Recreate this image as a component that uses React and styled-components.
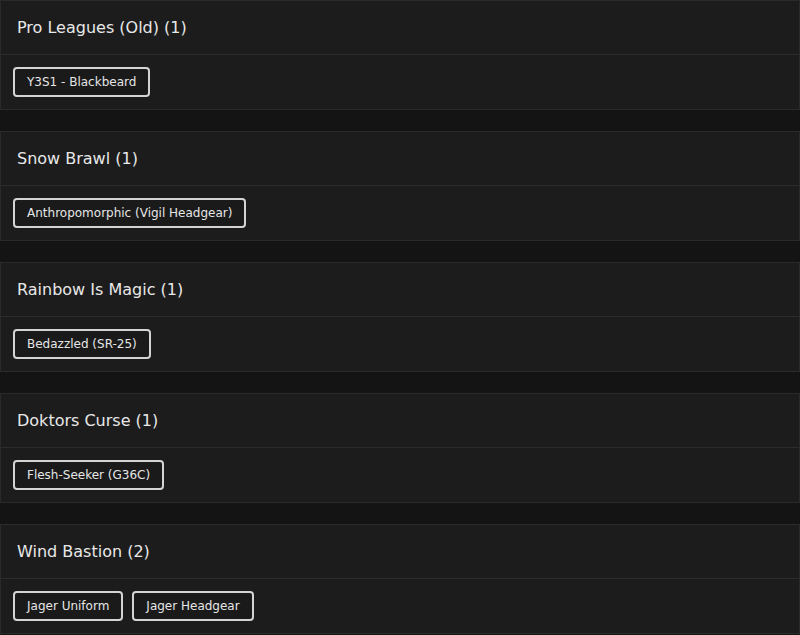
import styled, { createGlobalStyle } from "styled-components";

const GlobalStyle = createGlobalStyle`
  body {
    margin: 0;
    background-color: #141414;
    font-family: "DejaVu Sans", "Noto Sans", sans-serif;
  }
`;

const List = styled.div`
  display: flex;
  flex-direction: column;
  gap: 21px;
`;

const Card = styled.section`
  background-color: #1c1c1c;
  border: 1px solid #2a2a2a;
`;

const Header = styled.div`
  height: 53px;
  display: flex;
  align-items: center;
  padding: 0 16px;
  border-bottom: 1px solid #2c2c2c;
`;

const Title = styled.h2`
  margin: 0;
  font-size: 16px;
  font-weight: 500;
  color: #e8e8e8;
`;

const Body = styled.div`
  display: flex;
  flex-wrap: wrap;
  gap: 9px;
  padding: 12px;
`;

const Tag = styled.button`
  height: 30px;
  padding: 0 12px;
  background-color: #1a1a1a;
  border: 2px solid #d4d4d4;
  border-radius: 4px;
  color: #e6e6e6;
  font-family: inherit;
  font-size: 12px;
  cursor: pointer;
`;

const groups = [
  { name: "Pro Leagues (Old)", items: ["Y3S1 - Blackbeard"] },
  { name: "Snow Brawl", items: ["Anthropomorphic (Vigil Headgear)"] },
  { name: "Rainbow Is Magic", items: ["Bedazzled (SR-25)"] },
  { name: "Doktors Curse", items: ["Flesh-Seeker (G36C)"] },
  { name: "Wind Bastion", items: ["Jager Uniform", "Jager Headgear"] },
];

const App = () => {
  return (
    <>
      <GlobalStyle />
      <List>
        {groups.map((g) => (
          <Card key={g.name}>
            <Header>
              <Title>
                {g.name} ({g.items.length})
              </Title>
            </Header>
            <Body>
              {g.items.map((item) => (
                <Tag key={item}>{item}</Tag>
              ))}
            </Body>
          </Card>
        ))}
      </List>
    </>
  );
};

export default App;
